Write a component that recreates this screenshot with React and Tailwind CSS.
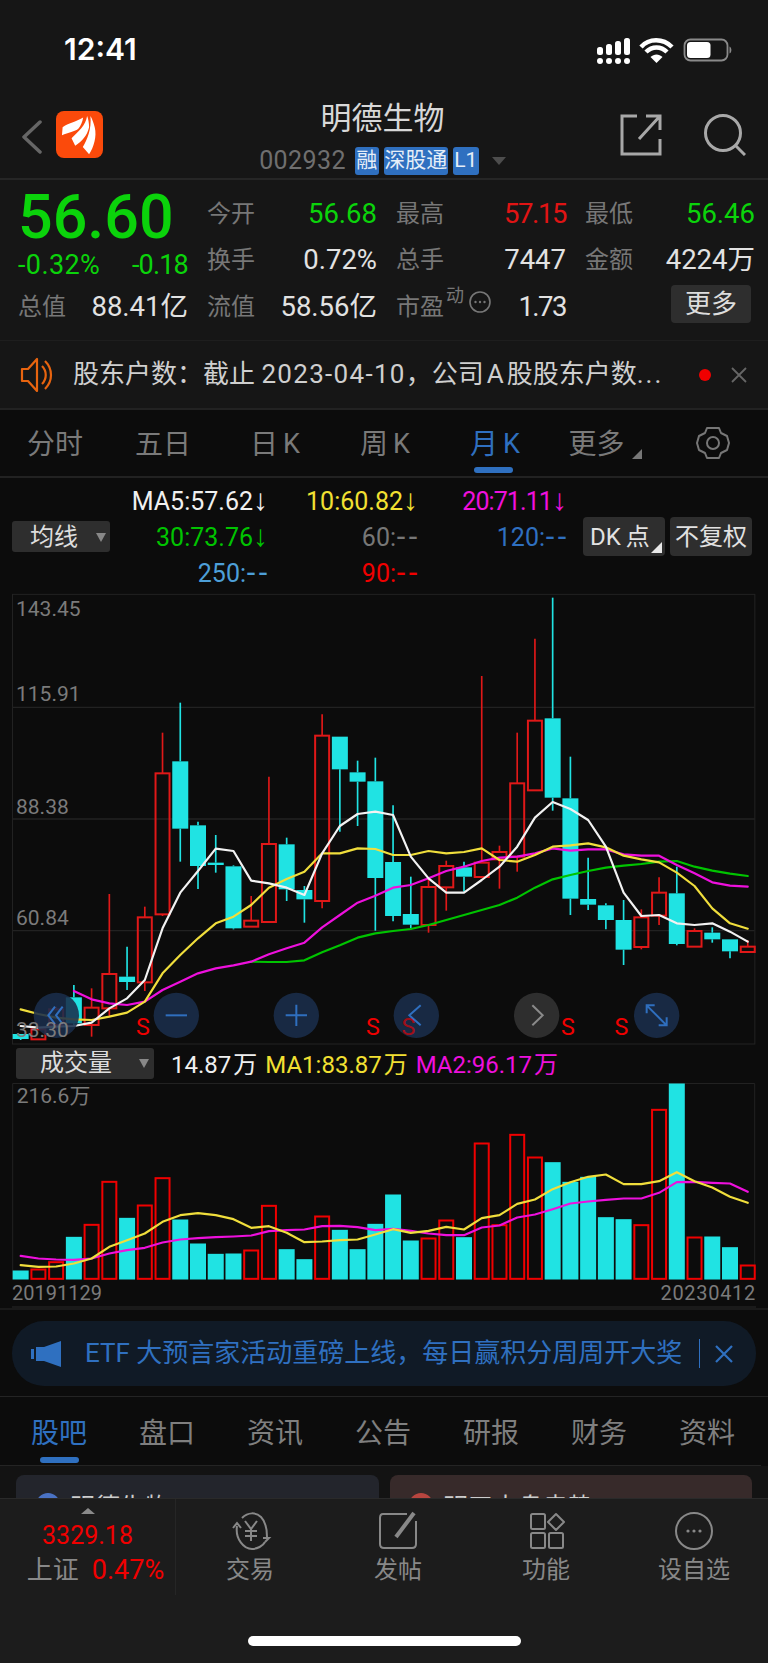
import React from 'react'

const CYAN = '#20e3e3'
const RED = '#e01818'

// [high, top, bottom, low, up]  y in 3x crop units
const candles = [
  [1332, 1332, 1347, 1350, 0], [1318, 1318, 1348, 1348, 1], [1250, 1258, 1305, 1318, 1], [1185, 1222, 1300, 1305, 0],
  [1195, 1253, 1305, 1340, 1], [912, 1152, 1255, 1280, 1], [1070, 1160, 1176, 1200, 0], [950, 982, 1177, 1203, 1],
  [428, 550, 973, 978, 1], [338, 514, 716, 815, 0], [695, 706, 828, 897, 0], [735, 818, 825, 848, 0],
  [826, 829, 1015, 1018, 0], [918, 992, 1010, 1010, 1], [560, 762, 996, 996, 1], [743, 763, 898, 933, 0],
  [888, 900, 928, 998, 0], [373, 437, 933, 955, 1], [440, 440, 538, 725, 0], [512, 547, 575, 708, 0],
  [503, 574, 864, 1022, 0], [646, 816, 978, 994, 0], [860, 972, 1004, 1015, 0], [865, 891, 1005, 1028, 1],
  [812, 828, 892, 962, 1], [815, 832, 860, 905, 0], [258, 818, 861, 865, 1], [767, 786, 808, 896, 1],
  [428, 580, 800, 845, 1], [146, 392, 601, 601, 1], [23, 385, 623, 662, 0], [500, 625, 926, 975, 0],
  [803, 927, 944, 960, 0], [940, 946, 990, 1018, 0], [930, 990, 1079, 1125, 0], [958, 982, 1071, 1078, 1],
  [862, 908, 977, 1005, 1], [830, 910, 1062, 1066, 0], [1015, 1023, 1070, 1070, 1], [1012, 1028, 1048, 1058, 0],
  [1048, 1048, 1084, 1105, 0], [1050, 1070, 1086, 1086, 1],
]

const ma5 = [1308, 1313, 1310, 1308, 1298, 1255, 1225, 1170, 1015, 908, 843, 776, 783, 872, 880, 893, 915, 790, 708, 672, 665, 675, 800, 865, 908, 908, 870, 830, 770, 683, 636, 657, 690, 770, 908, 978, 975, 1000, 1005, 1000, 1025, 1055]
const ma10 = [1258, 1272, 1283, 1288, 1290, 1280, 1268, 1235, 1150, 1095, 1045, 1000, 980, 945, 893, 867, 845, 790, 790, 775, 777, 795, 795, 783, 790, 786, 775, 810, 815, 795, 770, 766, 760, 772, 797, 808, 817, 848, 888, 955, 1000, 1016]
const ma20 = [1203, 1228, 1240, 1245, 1235, 1200, 1175, 1150, 1135, 1126, 1115, 1093, 1075, 1058, 1012, 975, 938, 917, 893, 885, 865, 843, 830, 813, 803, 800, 790, 775, 782, 778, 778, 793, 797, 797, 825, 850, 877, 887, 890]
const ma30 = [1115, 1116, 1116, 1111, 1087, 1066, 1043, 1030, 1023, 1017, 1005, 990, 975, 960, 945, 923, 893, 868, 855, 843, 833, 827, 822, 815, 813, 830, 842, 851, 858]

const vols = [691, 688, 666, 590, 554, 425, 533, 496, 414, 538, 610, 641, 640, 631, 497, 627, 657, 529, 569, 627, 551, 463, 601, 595, 541, 591, 310, 555, 284, 352, 366, 425, 410, 531, 537, 555, 209, 130, 592, 589, 621, 676]
const volMa1 = [675, 680, 679, 670, 655, 620, 600, 580, 545, 525, 519, 525, 537, 563, 558, 578, 606, 604, 600, 598, 583, 567, 578, 572, 560, 568, 534, 525, 491, 478, 447, 426, 410, 403, 432, 432, 423, 396, 423, 442, 470, 488]
const volMa2 = [647, 655, 658, 659, 655, 640, 630, 623, 607, 598, 594, 591, 589, 586, 573, 570, 568, 558, 557, 561, 570, 566, 572, 580, 585, 585, 562, 556, 532, 523, 507, 490, 484, 479, 475, 475, 458, 426, 425, 428, 430, 455]

const cx = (i) => 62 + i * 53.2
const pts = (arr, start = 0) => arr.map((y, i) => `${cx(i + start)},${y}`).join(' ')

function Line({ data, start, color, width = 6.5 }) {
  return <polyline points={pts(data, start)} fill="none" stroke={color} strokeWidth={width} strokeLinejoin="round" strokeLinecap="round" />
}

function RoundBtn({ x, gray, children }) {
  return (
    <g>
      <circle cx={x} cy="1276" r="68" fill={gray ? '#333333' : '#1a2e4b'} fillOpacity="0.88" />
      <g fill="none" stroke={gray ? '#8a8a8a' : '#2f6fbf'} strokeWidth="6">{children}</g>
    </g>
  )
}

function PriceChart() {
  return (
    <svg viewBox="0 0 2304 1368" className="block w-[768px] h-[456px]">
      <rect x="37.5" y="13" width="2227" height="1349" fill="none" stroke="#222222" strokeWidth="3" />
      {[352, 687, 1022].map((y) => <line key={y} x1="38" x2="2264" y1={y} y2={y} stroke="#222222" strokeWidth="4" />)}
      {candles.map(([h, t, b, l, up], i) => {
        const x = cx(i)
        const c = up ? RED : CYAN
        return (
          <g key={i}>
            <line x1={x} x2={x} y1={h} y2={t} stroke={c} strokeWidth="5" />
            <line x1={x} x2={x} y1={b} y2={l} stroke={c} strokeWidth="5" />
            {up ? <rect x={x - 21} y={t} width="42" height={b - t} fill="none" stroke={c} strokeWidth="6" /> : <rect x={x - 24} y={t} width="48" height={Math.max(b - t, 6)} fill={c} />}
          </g>
        )
      })}
      <Line data={ma30} start={13} color="#00c400" />
      <Line data={ma20} start={3} color="#ee10dd" />
      <Line data={ma10} color="#f0de3c" />
      <Line data={ma5} color="#f2f2f2" />
      <RoundBtn x={169}>
        <path d="M165 1250 L145 1276 L165 1302 M188 1250 L168 1276 L188 1302" />
      </RoundBtn>
      <RoundBtn x={529}><path d="M497 1276 H561" /></RoundBtn>
      <RoundBtn x={889}><path d="M857 1276 H921 M889 1244 V1308" /></RoundBtn>
      <RoundBtn x={1249}><path d="M1262 1246 L1228 1276 L1262 1306" /></RoundBtn>
      <RoundBtn x={1610} gray><path d="M1597 1246 L1628 1276 L1597 1306" /></RoundBtn>
      <RoundBtn x={1970}>
        <path d="M1940 1246 L2000 1306 M1940 1270 V1246 H1964 M2000 1282 V1306 H1976" />
      </RoundBtn>
      <g fill="#f00000" fontSize="70" fontFamily="Roboto, sans-serif" textAnchor="middle">
        <text x="429" y="1336">S</text>
        <text x="1119" y="1336">S</text>
        <text x="1225" y="1336" fillOpacity="0.65">S</text>
        <text x="1704" y="1336">S</text>
        <text x="1864" y="1336">S</text>
      </g>
      <g fill="#7b7b7b" fontSize="63" fontFamily="Roboto, sans-serif">
        <text x="48" y="78">143.45</text>
        <text x="48" y="333">115.91</text>
        <text x="48" y="671">88.38</text>
        <text x="48" y="1006">60.84</text>
        <text x="48" y="1341">33.30</text>
      </g>
    </svg>
  )
}

function VolumeChart() {
  return (
    <svg viewBox="0 129 2304 590" className="block w-[768px] h-[197px]">
      <path d="M38 718 V130 H2264 V718" fill="none" stroke="#222222" strokeWidth="3" />
      {vols.map((y, i) => {
        const x = cx(i)
        const up = candles[i][4]
        return up
          ? <rect key={i} x={x - 21} y={y} width="42" height={716 - y} fill="none" stroke="#f00000" strokeWidth="6" />
          : <rect key={i} x={x - 24} y={y} width="48" height={718 - y} fill={CYAN} />
      })}
      <Line data={volMa2} color="#ee10dd" />
      <Line data={volMa1} color="#f0de3c" />
      <text x="50" y="188" fill="#7b7b7b" fontSize="63" fontFamily="Roboto, 'Noto Sans CJK SC', sans-serif">216.6万</text>
    </svg>
  )
}

function StatusIcons() {
  return (
    <svg width="143" height="30" viewBox="0 0 143 30" className="block">
      <g fill="#ffffff">
        {[0, 9, 18, 27].map((x) => <circle key={x} cx={x + 3} cy="25" r="3" />)}
        <rect x="0" y="11" width="6" height="8" rx="2.5" />
        <rect x="9" y="8" width="6" height="11" rx="2.5" />
        <rect x="18" y="5" width="6" height="14" rx="2.5" />
        <rect x="27" y="2" width="6" height="17" rx="2.5" />
      </g>
      <path d="M44 11 C52 2 66 2 75 11 M49 16 C55 10 64 10 70 16" fill="none" stroke="#ffffff" strokeWidth="4.5" />
      <path d="M53.5 21 C57 17.5 62 17.5 65.5 21 L59.5 27 Z" fill="#ffffff" />
      <rect x="87.5" y="3.5" width="43" height="21" rx="6" fill="none" stroke="#8a8a8a" strokeWidth="1.8" />
      <rect x="90" y="6" width="23.5" height="16" rx="3.5" fill="#ffffff" />
      <path d="M132.5 10.5 C135 11.5 135 16.5 132.5 17.5 Z" fill="#8a8a8a" />
    </svg>
  )
}

function Logo() {
  return (
    <svg viewBox="168 35 142 142" className="w-[47px] h-[47px] block">
      <rect x="168" y="35" width="142" height="142" rx="24" fill="#fb4a0b" />
      <g fill="#ffffff">
        <path d="M250 55 C228 68 205 72 188 84 L186 108 C205 100 225 98 236 88 C243 80 248 68 250 55 Z" />
        <path d="M262 50 C258 78 235 98 215 117 L226 140 C246 126 262 110 268 84 C268 72 266 60 262 50 Z" />
        <path d="M272 50 C276 90 262 122 249 144 L268 166 C282 144 292 112 285 84 C282 72 278 60 272 50 Z" />
      </g>
    </svg>
  )
}

function Badge({ children, className }) {
  return <span className={`flex items-center justify-center h-[28px] rounded-[3px] bg-[#2f70c0] text-[#e6eef8] text-[21px] ${className}`}>{children}</span>
}

function Cell({ label, value, color = 'text-[#e2e2e2]', narrow }) {
  return (
    <div className="flex items-center justify-between">
      <span className="text-[24px] text-[#777777]">{label}</span>
      <span className={`text-[27.5px] ${narrow ? 'tracking-[-1.4px]' : ''} ${color}`}>{value}</span>
    </div>
  )
}

function Quote() {
  const green = 'text-[#0bd30b]'
  return (
    <div className="h-[160px] pl-[18px] pt-[10px] grid grid-cols-[170px_170px_170px_170px] grid-rows-[47px_46px_47px] gap-x-[19px] items-center">
      <div className={`text-[61px] leading-[47px] font-medium mt-[7px] ${green}`}>56.60</div>
      <Cell label="今开" value="56.68" color={green} />
      <Cell label="最高" value="57.15" color="text-[#e01414]" narrow />
      <Cell label="最低" value="56.46" color={green} />

      <div className={`flex justify-between text-[27px] leading-none mt-[10px] ${green}`}>
        <span className="tracking-[0.4px]">-0.32%</span>
        <span className="tracking-[-0.8px]">-0.18</span>
      </div>
      <Cell label="换手" value="0.72%" />
      <Cell label="总手" value="7447" />
      <Cell label="金额" value="4224万" />

      <Cell label="总值" value="88.41亿" />
      <Cell label="流值" value="58.56亿" />
      <div className="flex items-center">
        <span className="text-[24px] text-[#777777]">市盈</span>
        <span className="text-[18px] text-[#777777] leading-none mb-[22px] ml-[2px]">动</span>
        <svg width="22" height="22" viewBox="0 0 22 22" className="mb-[10px] ml-[5px]">
          <circle cx="11" cy="11" r="10" fill="none" stroke="#777777" strokeWidth="1.6" />
          <g fill="#777777"><circle cx="6.5" cy="11" r="1.2" /><circle cx="11" cy="11" r="1.2" /><circle cx="15.5" cy="11" r="1.2" /></g>
        </svg>
        <span className="ml-auto text-[27.5px] tracking-[-1.5px] text-[#e2e2e2]">1.73</span>
      </div>
      <div className="flex justify-end pr-[4px]">
        <span className="flex items-center justify-center w-[80px] h-[38px] rounded-[4px] bg-[#2e2e2e] text-[#dddddd] text-[26px] mb-[5px]">更多</span>
      </div>
    </div>
  )
}

function Notice() {
  return (
    <div className="h-[70px] border-t border-[#1e1e1e] border-b-[2px] border-b-[#222222] flex items-center pl-[20px]">
      <svg width="33" height="40" viewBox="0 0 33 40" className="block">
        <path d="M2 14 H8 L17 4 V36 L8 26 H2 Z" fill="none" stroke="#e8640f" strokeWidth="2.2" strokeLinejoin="round" />
        <path d="M22 11 C27 16 27 24 22 29 M25 6 C33 14 33 26 25 34" fill="none" stroke="#e8640f" strokeWidth="2.2" />
      </svg>
      <span className="ml-[20px] w-[600px] text-[26px] text-[#cfcfcf] whitespace-nowrap">
        股东户数：截止 <span className="tracking-[1.3px]">2023-04-10</span>，公司<span className="mx-[3px]">A</span>股股东户数<span className="tracking-[2px]">...</span>
      </span>
      <span className="ml-[26px] w-[12px] h-[12px] rounded-full bg-[#f00000]" />
      <svg width="16" height="16" viewBox="0 0 16 16" className="ml-[20px]">
        <path d="M1 1 L15 15 M15 1 L1 15" stroke="#666666" strokeWidth="1.8" />
      </svg>
    </div>
  )
}

function Kk({ t }) {
  return (
    <span className="flex items-center">{t}<span className="ml-[5px] text-[27px]">K</span></span>
  )
}

function PeriodTabs() {
  return (
    <div className="h-[68px] pt-[3px] border-b-[2px] border-[#222222] grid grid-cols-[110px_110px_110px_110px_110px_110px_110px] text-[28px] text-[#7a7a7a]">
      <div className="flex items-center justify-center">分时</div>
      <div className="flex items-center justify-center pr-[4px]">五日</div>
      <div className="flex items-center justify-center"><Kk t="日" /></div>
      <div className="flex items-center justify-center"><Kk t="周" /></div>
      <div className="relative flex items-center justify-center text-[#2f70c0]">
        <Kk t="月" />
        <span className="absolute bottom-[3px] left-[34px] w-[39px] h-[6px] rounded-full bg-[#2f70c0]" />
      </div>
      <div className="flex items-center justify-center">
        更多
        <svg width="10" height="10" viewBox="0 0 10 10" className="mt-[18px] ml-[7px]"><path d="M10 0 V10 H0 Z" fill="#777777" /></svg>
      </div>
      <div className="flex items-center justify-center pr-[4px] pb-[3px]">
        <svg width="34" height="36" viewBox="0 0 34 36">
          <path d="M11 3 H23 L25 8 L31 11 L33 18 L31 25 L25 28 L23 33 H11 L9 28 L3 25 L1 18 L3 11 L9 8 Z" fill="none" stroke="#777777" strokeWidth="2" strokeLinejoin="round" />
          <circle cx="17" cy="18" r="6" fill="none" stroke="#777777" strokeWidth="2" />
        </svg>
      </div>
    </div>
  )
}

function Down() {
  return <span className="font-['Liberation_Sans',sans-serif] text-[30px] leading-none">↓</span>
}

function Dash() {
  return <span className="font-['Liberation_Sans',sans-serif] text-[30px] leading-none tracking-[2px] mr-[-2px]">--</span>
}

function Ma() {
  return (
    <div className="h-[112px] pl-[12px] pt-[6px] flex">
      <div className="self-center mb-[1px] w-[98px] h-[31px] rounded-[3px] bg-[#2e2e2e] flex items-center pl-[18px] text-[24px] text-[#dddddd]">
        均线
        <svg width="10" height="10" viewBox="0 0 10 10" className="ml-[18px]"><path d="M0 1 H10 L5 10 Z" fill="#888888" /></svg>
      </div>
      <div className="ml-[2px] w-[455px] h-[108px] grid grid-cols-[156px_150px_149px] grid-rows-[36px_36px_36px] items-center text-right text-[25px] leading-[36px]">
        <span className="text-[#f0f0f0] whitespace-nowrap">MA5:57.62<Down /></span>
        <span className="text-[#f2e032] whitespace-nowrap">10:60.82<Down /></span>
        <span className="text-[#ee10dd] whitespace-nowrap"><span className="tracking-[-0.9px]">20:71.11</span><Down /></span>
        <span className="text-[#00c400] whitespace-nowrap">30:73.76<Down /></span>
        <span className="text-[#777777]">60:<Dash /></span>
        <span className="text-[#2f70c0]">120:<Dash /></span>
        <span className="text-[#4d9fd8]">250:<Dash /></span>
        <span className="text-[#f00000]">90:<Dash /></span>
      </div>
      <div className="self-center mb-[1px] ml-[16px] flex gap-[5px] text-[24px] text-[#e2e2e2]">
        <div className="relative w-[82px] h-[39px] rounded-[4px] bg-[#2e2e2e] flex items-center pl-[7px] gap-[5px]">
          <span>DK</span><span>点</span>
          <svg width="11" height="11" viewBox="0 0 11 11" className="absolute right-[3px] bottom-[3px]"><path d="M11 0 V11 H0 Z" fill="#e8e8e8" /></svg>
        </div>
        <div className="w-[82px] h-[39px] rounded-[4px] bg-[#2e2e2e] flex items-center justify-center">不复权</div>
      </div>
    </div>
  )
}

function VolumeHeader() {
  return (
    <div className="h-[37px] pl-[16px] flex items-center text-[24px] whitespace-nowrap">
      <div className="w-[138px] h-[31px] mb-[3px] rounded-[3px] bg-[#2e2e2e] flex items-center pl-[24px] text-[#dddddd]">
        成交量
        <svg width="10" height="9" viewBox="0 0 10 9" className="ml-[27px]"><path d="M0 0 H10 L5 9 Z" fill="#888888" /></svg>
      </div>
      <span className="ml-[17px] text-[#f0f0f0] flex gap-[2px]"><span>14.87</span><span>万</span></span>
      <span className="ml-[8px] text-[#f2e032] flex gap-[2px]"><span>MA1:83.87</span><span>万</span></span>
      <span className="ml-[8px] text-[#ee10dd] flex gap-[2px]"><span>MA2:96.17</span><span>万</span></span>
    </div>
  )
}

function Banner() {
  return (
    <div className="h-[89px] border-t-[2px] border-[#1a1a1a] border-b border-b-[#242424] px-[12px] pt-[11px]">
      <div className="h-[65px] rounded-[32px] bg-[#101a26] flex items-center pl-[19px] text-[#2f70c0]">
        <svg width="31" height="26" viewBox="0 0 31 26" className="block">
          <rect x="0" y="8" width="3" height="10" fill="#2f70c0" />
          <path d="M5 6 H13 L30 0 V26 L13 20 H5 Z" fill="#2f70c0" />
        </svg>
        <span className="ml-[23px] w-[605px] text-[26px] whitespace-nowrap">ETF 大预言家活动重磅上线，每日赢积分周周开大奖</span>
        <span className="ml-[9px] w-[1px] h-[29px] bg-[#2f70c0]" />
        <svg width="18" height="18" viewBox="0 0 18 18" className="ml-[15px]">
          <path d="M1 1 L17 17 M17 1 L1 17" stroke="#2f70c0" strokeWidth="2.2" />
        </svg>
      </div>
    </div>
  )
}

function InfoTabs() {
  const tabs = ['股吧', '盘口', '资讯', '公告', '研报', '财务', '资料']
  return (
    <div className="h-[69px] pl-[5px] pt-[6px] border-b border-[#242424] grid grid-cols-7 w-[761px] text-[28px] text-[#7f7f7f]">
      {tabs.map((t, i) => (
        <div key={t} className={i === 0 ? 'relative flex items-center justify-center text-[#2f70c0]' : 'flex items-center justify-center'}>
          {t}
          {i === 0 && <span className="absolute bottom-[2px] left-[35px] w-[39px] h-[6px] rounded-full bg-[#2f70c0]" />}
        </div>
      ))}
    </div>
  )
}

function Cards() {
  return (
    <div className="h-[32px] overflow-hidden bg-[#131313] pl-[16px] pt-[9px] flex gap-[11px]">
      <div className="w-[363px] h-[60px] rounded-[8px] bg-[#23252c] pl-[20px] pt-[18px] flex gap-[10px] text-[25px] leading-[30px] text-[#cccccc]">
        <span className="w-[24px] h-[24px] rounded-full bg-[#4a72c4]" />
        <span>明德生物</span>
      </div>
      <div className="w-[362px] h-[60px] rounded-[8px] bg-[#372a2a] pl-[19px] pt-[18px] flex gap-[10px] text-[25px] leading-[30px] text-[#cccccc]">
        <span className="w-[24px] h-[24px] rounded-full bg-[#b8453f]" />
        <span>明天大盘走势</span>
      </div>
    </div>
  )
}

function NavItem({ label, children }) {
  return (
    <div className="flex flex-col items-center pt-[12px]">
      <svg width="44" height="40" viewBox="0 0 44 40" className="block" fill="none" stroke="#888888" strokeWidth="2">{children}</svg>
      <span className="mt-[4px] text-[24px] leading-[30px] text-[#888888]">{label}</span>
    </div>
  )
}

function BottomNav() {
  return (
    <div className="relative h-[165px] bg-[#1c1c1c] border-t border-[#2a2a2a] flex">
      <div className="w-[176px] h-[96px] border-r border-[#262626] flex flex-col items-center pt-[9px]">
        <svg width="14" height="6" viewBox="0 0 14 6" className="block"><path d="M7 0 L14 6 H0 Z" fill="#8a8a8a" /></svg>
        <span className="mt-[7px] text-[25px] leading-[30px] text-[#f00000]">3329.18</span>
        <div className="mt-[4px] flex items-center gap-[13px] whitespace-nowrap pl-[16px] leading-[30px]">
          <span className="text-[26px] text-[#888888]">上证</span>
          <span className="text-[27px] text-[#f00000]">0.47%</span>
        </div>
      </div>
      <div className="grid grid-cols-[148px_148px_148px_148px]">
        <NavItem label="交易">
          <path d="M9 15 C7 28 16 38 24 38 C29 38 35 35 37 31 M14 7 C20 1 28 1 33 6 C37 10 39 17 39 26" />
          <path d="M5 17 L9 12 L13 17 M35 27 L41 27 L37 31" />
          <path d="M17 10 L23 18 L29 10 M23 18 V30 M17 20 H29 M17 25 H29" />
        </NavItem>
        <NavItem label="发帖">
          <path d="M31 3 H7 Q4 3 4 7 V33 Q4 37 8 37 H36 Q40 37 40 33 V10" />
          <path d="M38 2 L20 26" strokeWidth="4" stroke="#888888" />
        </NavItem>
        <NavItem label="功能">
          <rect x="7" y="3" width="14" height="15" rx="1.5" />
          <rect x="7" y="22" width="14" height="15" rx="1.5" />
          <rect x="25" y="22" width="14" height="15" rx="1.5" />
          <path d="M32 3 L40 11 L32 19 L24 11 Z" strokeLinejoin="round" />
        </NavItem>
        <NavItem label="设自选">
          <circle cx="22" cy="20" r="18" />
          <g fill="#888888" stroke="none"><circle cx="16" cy="20" r="1.6" /><circle cx="22" cy="20" r="1.6" /><circle cx="28" cy="20" r="1.6" /></g>
        </NavItem>
      </div>
      <span className="absolute left-[248px] bottom-[17px] w-[273px] h-[10px] rounded-full bg-white" />
    </div>
  )
}

export default function App() {
  return (
    <div className="w-[768px] h-[1663px] overflow-hidden bg-[#0c0c0c] flex flex-col font-['Roboto','Noto_Sans_CJK_SC',sans-serif]">
      <div className="bg-[#161616]">
        {/* status bar */}
        <div className="h-[95px] flex items-start justify-between pl-[64px] pr-[28px] pt-[29px]">
          <span className="text-[30px] leading-[40px] font-semibold text-white font-['Inter',sans-serif]">12:41</span>
          <div className="pt-[7px]"><StatusIcons /></div>
        </div>
        {/* title bar */}
        <div className="h-[85px] border-b-[2px] border-[#262626] grid grid-cols-[1fr_260px_1fr]">
          <div className="flex items-start pl-[21px] pt-[16px]">
            <svg width="21" height="34" viewBox="0 0 21 34" className="mt-[9px]">
              <path d="M19 2 L3 17 L19 32" fill="none" stroke="#666666" strokeWidth="3.5" strokeLinecap="round" strokeLinejoin="round" />
            </svg>
            <div className="ml-[14px]"><Logo /></div>
          </div>
          <div className="flex flex-col items-center pr-[3px]">
            <div className="text-[31px] leading-[44px] mt-[2px] text-[#d8d8d8] whitespace-nowrap">明德生物</div>
            <div className="flex items-center whitespace-nowrap mt-[1px]">
              <span className="text-[25px] text-[#6f6f6f] tracking-[0.4px]">002932</span>
              <Badge className="ml-[9px] w-[24px]">融</Badge>
              <Badge className="ml-[5px] w-[64px]">深股通</Badge>
              <Badge className="ml-[5px] w-[26px]">L1</Badge>
              <svg width="14" height="8" viewBox="0 0 14 8" className="ml-[13px]"><path d="M0 0 H14 L7 8 Z" fill="#4d4d4d" /></svg>
            </div>
          </div>
          <div className="flex items-start justify-end gap-[42px] pr-[22px] pt-[19px]">
            <svg width="42" height="42" viewBox="0 0 42 42">
              <path d="M17 2 H2 V40 H40 V25 M26 2 H40 V16 M40 2 L19 25" fill="none" stroke="#a8a8a8" strokeWidth="3" />
            </svg>
            <svg width="42" height="42" viewBox="0 0 42 42">
              <circle cx="19" cy="19" r="17.5" fill="none" stroke="#a8a8a8" strokeWidth="3" />
              <path d="M31 31 L41 41" stroke="#a8a8a8" strokeWidth="3" />
            </svg>
          </div>
        </div>
        <Quote />
        <Notice />
      </div>
      <PeriodTabs />
      <Ma />
      <PriceChart />
      <VolumeHeader />
      <VolumeChart />
      <div className="h-[28px] mx-[12px] border-b-[2px] border-[#1a1a1a] flex justify-between items-center text-[20px] text-[#7b7b7b]">
        <span>20191129</span>
        <span className="tracking-[0.7px]">20230412</span>
      </div>
      <Banner />
      <InfoTabs />
      <Cards />
      <BottomNav />
    </div>
  )
}
